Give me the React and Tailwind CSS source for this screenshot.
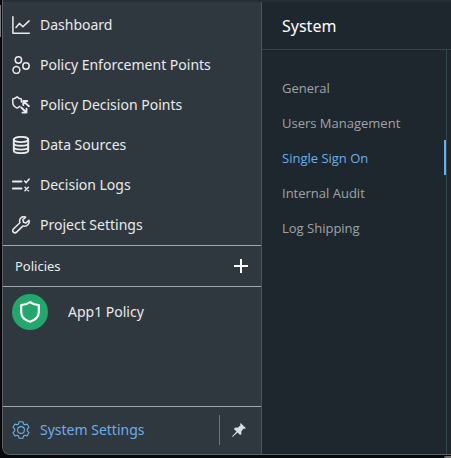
import React from "react";

function Icon({ children, className = "", width = 1.5 }) {
  return (
    <svg
      viewBox="0 0 18 18"
      fill="none"
      stroke="currentColor"
      strokeWidth={width}
      strokeLinecap="round"
      strokeLinejoin="round"
      aria-hidden="true"
      className={"h-[18px] w-[18px] shrink-0 " + className}
    >
      {children}
    </svg>
  );
}

const ChartIcon = () => (
  <Icon>
    <path d="M.9.8v16.400h16.400M4 11.400l3.400-4 3.500 3.400 6.200-5.900" />
  </Icon>
);

const CirclesIcon = () => (
  <Icon>
    <circle cx="6.4" cy="4" r="3.2" />
    <circle cx="14" cy="10" r="3.2" />
    <circle cx="4.4" cy="14" r="3.4" />
  </Icon>
);

const DecisionIcon = () => (
  <Icon>
    <path d="M9.400 6V3C7.700 2.900 6.200 1.900 5.100.9 4 1.900 2.500 2.800.8 3v3.600c0 2.600 1.900 4.500 4.300 5.500 1-.4 1.900-1 2.600-1.700" />
    <path d="M16.900 10.200l-5.400-5M11.300 9V5h4M9.300 11.500l5 5M14.500 12.600v4h-4" strokeWidth="1.9" />
  </Icon>
);

const DatabaseIcon = () => (
  <Icon width={1.9}>
    <ellipse cx="9" cy="3.5" rx="7.2" ry="2.6" />
    <path d="M1.800 3.500v11c0 1.500 3.200 2.600 7.200 2.600s7.200-1.100 7.200-2.600v-11M1.800 7.200c0 1.500 3.200 2.600 7.200 2.600s7.200-1.100 7.200-2.600M1.800 11c0 1.500 3.200 2.600 7.200 2.600s7.200-1.100 7.200-2.600" />
  </Icon>
);

const LogsIcon = () => (
  <Icon>
    <path d="M.8 5.500h8.700M.8 12.500h8.700" strokeWidth="1.9" />
    <path d="M12.600 5l1.600 1.600 3-3.600M13 11.300l3.400 3.400M16.400 11.300L13 14.700" />
  </Icon>
);

const WrenchIcon = () => (
  <Icon>
    <path d="M13.600 1.100c-2-.8-4.200-.2-5.300 1.500-.8 1.300-.9 2.800-.4 4.200L1.400 13a2.100 2.100 0 0 0 0 3.100c.9.900 2.300.9 3.200 0L11 9.900c1.600.6 3.500.2 4.800-1.100 1.300-1.200 1.700-3 1.200-4.600l-3 2.700-2.500-.6-.6-2.500z" />
  </Icon>
);

const GearIcon = () => (
  <Icon width={1.1}>
    <path d="M7.100.7h3.800l.6 2.300 1.300.8 2.300-.7 1.900 3.300-1.700 1.700v1.800l1.700 1.700-1.900 3.300-2.300-.7-1.300.8-.6 2.300H7.100l-.6-2.300-1.300-.8-2.300.7L1 11.600l1.700-1.700V8.100L1 6.400l1.900-3.300 2.300.7L6.500 3z" />
    <circle cx="9" cy="9" r="3.4" />
  </Icon>
);

const navigation = [
  { label: "Dashboard", icon: ChartIcon },
  { label: "Policy Enforcement Points", icon: CirclesIcon },
  { label: "Policy Decision Points", icon: DecisionIcon },
  { label: "Data Sources", icon: DatabaseIcon },
  { label: "Decision Logs", icon: LogsIcon },
  { label: "Project Settings", icon: WrenchIcon },
];

const settings = ["General", "Users Management", "Single Sign On", "Internal Audit", "Log Shipping"];

function Sidebar() {
  return (
    <aside className="flex w-[259px] shrink-0 flex-col border-r border-[#4d565b] bg-[#30383f] text-sm text-[#e9eaea]">
      <nav aria-label="Main" className="pt-[3px]">
        {navigation.map(({ label, icon: Glyph }) => (
          <a key={label} href="#" className="flex h-10 items-center gap-2.5 pl-[9px]">
            <Glyph />
            {label}
          </a>
        ))}
      </nav>
      <div className="flex h-[42px] shrink-0 items-center justify-between border-y border-[#a4a9ad] px-3">
        <h2 className="text-[13px]">Policies</h2>
        <button type="button" aria-label="Add policy" className="flex h-4 w-4 items-center justify-center text-white">
          <svg viewBox="0 0 14 14" stroke="currentColor" strokeWidth="2" className="h-3.5 w-3.5">
            <path d="M7 0v14M0 7h14" />
          </svg>
        </button>
      </div>
      <a href="#" className="flex h-[50px] items-center gap-5 pl-[9px]">
        <span className="flex h-9 w-9 items-center justify-center rounded-full bg-[#23a76b] text-white">
          <svg viewBox="0 0 20 22" fill="none" stroke="currentColor" strokeWidth="2.2" strokeLinejoin="round" className="h-[22px] w-5">
            <path d="M10 1.200C7.500 3 4.300 4 1.200 4.200V11c0 4.700 3.800 8.100 8.800 9.800 5-1.700 8.800-5.100 8.800-9.800V4.200C15.700 4 12.500 3 10 1.200z" />
          </svg>
        </span>
        App1 Policy
      </a>
      <div className="mt-auto flex h-12 shrink-0 items-center border-t border-[#a4a9ad] pb-px">
        <a href="#" className="flex flex-1 items-center gap-2.5 pl-[9px] text-[#6caeea]">
          <GearIcon />
          System Settings
        </a>
        <button type="button" aria-label="Pin sidebar" className="flex h-[30px] w-[42px] items-center justify-center border-l border-[#6f767c] pr-1 text-[#d8dee7]">
          <svg viewBox="0 0 14 14" fill="currentColor" className="h-3.5 w-3.5">
            <path d="M8.600 0L14 5.200l-1.400.6-.8-.3-2.300 2.600-.2 3.200-1.200.8-2.600-2.600L.6 14 0 13.500l4.500-5L1.900 5.900l.9-1.200 3.200-.2L8.500 2.200 8.100 1.300z" />
          </svg>
        </button>
      </div>
    </aside>
  );
}

export default function App() {
  return (
    <div className="flex h-screen flex-col bg-[#08080b] font-['Noto_Sans','Open_Sans',sans-serif]">
      <div className="flex min-h-0 flex-1">
        <div className="w-0.5 shrink-0 pt-[5px]">
          <div className="h-8 w-px bg-[#77797b]" />
        </div>
        <div className="flex min-w-0 flex-1 flex-col overflow-hidden rounded-bl-lg border-b border-l border-[#596267] bg-[#1f272e]">
          <div className="h-0.5 shrink-0 bg-[#262e36]" />
          <div className="flex min-h-0 flex-1">
            <Sidebar />
            <main className="flex min-w-0 flex-1 flex-col">
              <header className="flex h-12 shrink-0 items-center border-b border-[#30474e] pl-5">
                <h1 className="text-base text-white">System</h1>
              </header>
              <div className="flex min-h-0 flex-1">
                <nav aria-label="System" className="flex-1 border-r border-[#30474e] pt-5 font-['Open_Sans',sans-serif] text-[13px] text-[#9fa3a5]">
                  {settings.map((label) => (
                    <a
                      key={label}
                      href="#"
                      className={
                        label === "Single Sign On"
                          ? "flex h-[35px] items-center border-r-2 border-[#6caeea] pt-0.5 pl-5 text-[#6caeea]"
                          : "flex h-[35px] items-center pt-0.5 pl-5"
                      }
                    >
                      {label}
                    </a>
                  ))}
                </nav>
                <div className="w-1 shrink-0" />
              </div>
            </main>
          </div>
        </div>
      </div>
      <div className="flex h-[3px] shrink-0 items-end justify-end">
        <div className="h-0.5 w-[7px] rounded-tl-sm bg-[#77716f]" />
      </div>
    </div>
  );
}
